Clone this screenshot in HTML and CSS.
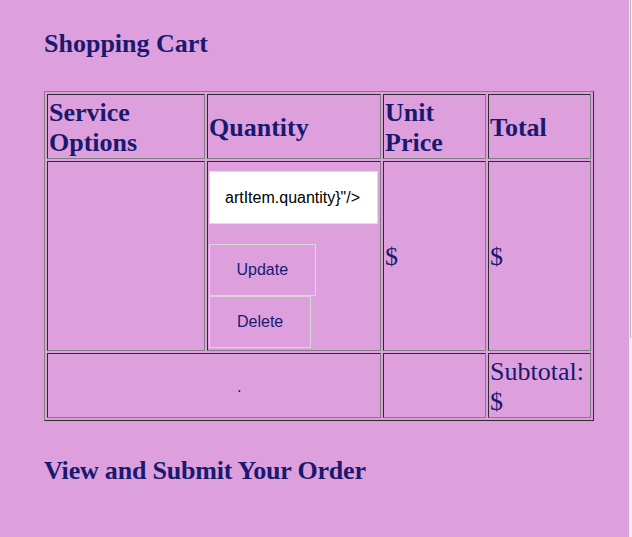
FILE: index.html
```html
<!DOCTYPE html>
<html lang="en">
<head>
<meta charset="utf-8">
<title>Shopping Cart</title>
<link rel="stylesheet" href="styles.css">
</head>
<body>
<main class="page">
  <h2 class="title">Shopping Cart</h2>
  <table class="cart">
    <colgroup>
      <col class="c-opt">
      <col class="c-qty">
      <col class="c-unit">
      <col class="c-total">
    </colgroup>
    <thead>
      <tr class="row-head">
        <th>Service Options</th>
        <th>Quantity</th>
        <th>Unit Price</th>
        <th>Total</th>
      </tr>
    </thead>
    <tbody>
      <tr class="row-item">
        <td></td>
        <td class="qty-cell">
          <div class="qty-input"><span>artItem.quantity}"/&gt;</span></div>
          <button class="btn btn-update" type="button">Update</button>
          <button class="btn" type="button">Delete</button>
        </td>
        <td>$</td>
        <td>$</td>
      </tr>
    </tbody>
    <tfoot>
      <tr class="row-foot">
        <td colspan="2" class="dot-cell"><a class="dot" href="#">.</a></td>
        <td></td>
        <td>Subtotal: $</td>
      </tr>
    </tfoot>
  </table>
  <h2 class="submit">View and Submit Your Order</h2>
</main>
<div class="scrollbar" aria-hidden="true"><div class="thumb"></div></div>
</body>
</html>
```

FILE: styles.css
```css
html, body {
  margin: 0;
  padding: 0;
  background: #dda0dd;
}
body {
  color: #191970;
  font-family: "Liberation Serif", "Times New Roman", serif;
  font-size: 26px;
  line-height: 30px;
}
.page {
  padding: 29px 0 40px 44px;
}
h2 {
  font-size: 26px;
  line-height: 30px;
  font-weight: bold;
  margin: 0;
}
.title {
  margin-bottom: 32px;
}
.submit {
  margin-top: 35px;
  letter-spacing: -0.2px;
}
.cart {
  width: 550px;
  table-layout: fixed;
  border-collapse: separate;
  border-spacing: 2px;
  border: 1px outset grey;
}
.c-opt { width: 158px; }
.c-qty { width: 174px; }
.c-unit { width: 103px; }
.c-total { width: 103px; }
.cart th, .cart td {
  border: 1px inset grey;
  padding: 2px 1px 0 1px;
  text-align: left;
  vertical-align: middle;
  font-weight: normal;
}
.cart th {
  font-weight: bold;
}
.row-head { height: 65px; }
.row-foot { height: 65px; }
.qty-cell.qty-cell {
  vertical-align: top;
  padding: 1px 1px 2px 1px;
}
.qty-input {
  margin-top: 8px;
  width: 169px;
  height: 53px;
  box-sizing: border-box;
  border: 1px solid #dcdcdc;
  background: #fff;
  padding: 0 8px 0 15px;
  display: flex;
  align-items: center;
  overflow: hidden;
  white-space: nowrap;
  font-family: "Liberation Sans", Arial, sans-serif;
  font-size: 16px;
  line-height: 18px;
  color: #000;
}
.btn {
  display: block;
  margin: 0;
  background: transparent;
  border: 1px solid #d8d8d8;
  color: #191970;
  font-family: "Liberation Sans", Arial, sans-serif;
  font-size: 16px;
  line-height: 18px;
  padding: 16px 27px;
  height: 52px;
  box-sizing: border-box;
  cursor: pointer;
}
.btn-update {
  margin-top: 20px;
  padding: 16px 26.5px;
}
.dot-cell.dot-cell {
  padding-left: 189px;
  font-family: "Liberation Sans", Arial, sans-serif;
  font-size: 16px;
  line-height: 18px;
}
.dot {
  color: #0000ff;
  text-decoration: none;
}
.scrollbar {
  position: fixed;
  top: 0;
  right: 0;
  width: 3px;
  height: 100%;
  background: #f3eef3;
}
.thumb {
  margin-left: 1px;
  width: 1px;
  height: 338px;
  background: #b4b4b4;
}
```
